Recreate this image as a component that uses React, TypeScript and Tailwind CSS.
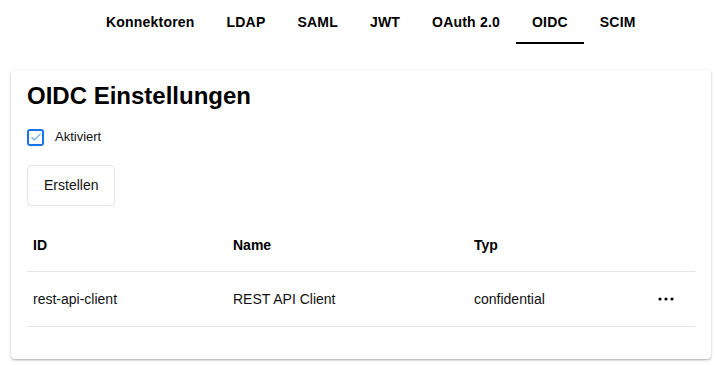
import React from "react";

const tabs = ["Konnektoren", "LDAP", "SAML", "JWT", "OAuth 2.0", "OIDC", "SCIM"];

export default function App() {
  return (
    <div className="w-[717px] h-[365px] bg-white text-black" style={{ fontFamily: '"Liberation Sans", Arial, sans-serif' }}>
      <div className="flex pl-[90px] h-[44px]">
        {tabs.map((t) => (
          <div key={t} className="relative flex items-center px-4 h-[44px] text-[14px] font-bold tracking-[0.2px] text-black">
            {t}
            {t === "OIDC" && <div className="absolute left-0 right-0 bottom-0 h-[2px] bg-black" />}
          </div>
        ))}
      </div>
      <div className="mt-[26px] ml-[11px] w-[700px] h-[289px] rounded-[4px] bg-white px-4 pt-[10px] shadow-[0_1px_3px_rgba(0,0,0,0.25),0_1px_1px_rgba(0,0,0,0.1)]">
        <h1 className="text-[24px] leading-[32px] font-bold">OIDC Einstellungen</h1>
        <div className="mt-[15px] flex items-center h-[20px]">
          <div className="w-[17px] h-[17px] rounded-[3px] border-2 border-[#1a73e8] flex items-center justify-center">
            <svg width="12" height="10" viewBox="0 0 12 10">
              <path d="M1.5 5.2 L4.5 8 L10.5 1.8" fill="none" stroke="#6aa6ee" strokeWidth="1.2" />
            </svg>
          </div>
          <span className="ml-[11px] text-[13px] text-[#111]">Aktiviert</span>
        </div>
        <button className="mt-[18px] h-[41px] px-4 border border-[#e4e4e4] rounded-[4px] text-[14px] text-[#111] bg-white">
          Erstellen
        </button>
        <div className="mt-[12px] text-[14px]">
          <div className="grid grid-cols-[200px_241px_168px_60px] h-[54px] pt-[1px] items-center border-b border-[#e5e5e5] font-bold">
            <div className="pl-[6px]">ID</div>
            <div className="pl-[6px]">Name</div>
            <div className="pl-[6px]">Typ</div>
            <div />
          </div>
          <div className="grid grid-cols-[200px_241px_168px_60px] h-[55px] items-center border-b border-[#e5e5e5] text-[#111]">
            <div className="pl-[6px]">rest-api-client</div>
            <div className="pl-[6px]">REST API Client</div>
            <div className="pl-[6px]">confidential</div>
            <div className="flex justify-center">
              <svg width="16" height="4" viewBox="0 0 16 4">
                <circle cx="2" cy="2" r="1.6" fill="#000" />
                <circle cx="8" cy="2" r="1.6" fill="#000" />
                <circle cx="14" cy="2" r="1.6" fill="#000" />
              </svg>
            </div>
          </div>
        </div>
      </div>
    </div>
  );
}
